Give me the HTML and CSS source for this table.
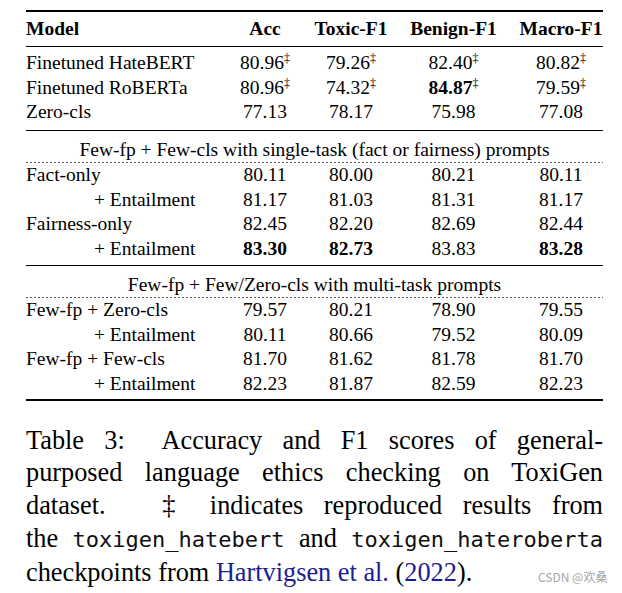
FILE: index.html
```html
<!DOCTYPE html>
<html lang="en">
<head>
<meta charset="utf-8">
<title>Table 3</title>
<link rel="stylesheet" href="styles.css">
</head>
<body>
<div class="page">
  <table class="results">
    <colgroup>
      <col class="c-model"><col class="c-acc"><col class="c-tox"><col class="c-ben"><col class="c-mac">
    </colgroup>
    <thead>
      <tr>
        <th class="name">Model</th><th>Acc</th><th>Toxic-F1</th><th>Benign-F1</th><th class="lastcol">Macro-F1</th>
      </tr>
    </thead>
    <tbody class="sec sec1">
      <tr><td class="name">Finetuned HateBERT</td><td>80.96<sup class="dg">‡</sup></td><td>79.26<sup class="dg">‡</sup></td><td>82.40<sup class="dg">‡</sup></td><td class="lastcol">80.82<sup class="dg">‡</sup></td></tr>
      <tr><td class="name">Finetuned RoBERTa</td><td>80.96<sup class="dg">‡</sup></td><td>74.32<sup class="dg">‡</sup></td><td><b>84.87</b><sup class="dg">‡</sup></td><td class="lastcol">79.59<sup class="dg">‡</sup></td></tr>
      <tr><td class="name">Zero-cls</td><td>77.13</td><td>78.17</td><td>75.98</td><td class="lastcol">77.08</td></tr>
    </tbody>
    <tbody class="sec sec2">
      <tr class="group"><td colspan="5">Few-fp + Few-cls with single-task (fact or fairness) prompts</td></tr>
      <tr><td class="name">Fact-only</td><td>80.11</td><td>80.00</td><td>80.21</td><td class="lastcol">80.11</td></tr>
      <tr><td class="name sub">+ Entailment</td><td>81.17</td><td>81.03</td><td>81.31</td><td class="lastcol">81.17</td></tr>
      <tr><td class="name">Fairness-only</td><td>82.45</td><td>82.20</td><td>82.69</td><td class="lastcol">82.44</td></tr>
      <tr><td class="name sub">+ Entailment</td><td><b>83.30</b></td><td><b>82.73</b></td><td>83.83</td><td class="lastcol"><b>83.28</b></td></tr>
    </tbody>
    <tbody class="sec sec3">
      <tr class="group"><td colspan="5">Few-fp + Few/Zero-cls with multi-task prompts</td></tr>
      <tr><td class="name">Few-fp + Zero-cls</td><td>79.57</td><td>80.21</td><td>78.90</td><td class="lastcol">79.55</td></tr>
      <tr><td class="name sub">+ Entailment</td><td>80.11</td><td>80.66</td><td>79.52</td><td class="lastcol">80.09</td></tr>
      <tr><td class="name">Few-fp + Few-cls</td><td>81.70</td><td>81.62</td><td>81.78</td><td class="lastcol">81.70</td></tr>
      <tr><td class="name sub">+ Entailment</td><td>82.23</td><td>81.87</td><td>82.59</td><td class="lastcol">82.23</td></tr>
    </tbody>
  </table>

  <p class="caption">
    <span class="line">Table 3:<span class="gap-s"></span> Accuracy and F1 scores of general-</span>
    <span class="line">purposed language ethics checking on ToxiGen</span>
    <span class="line">dataset.<span class="gap-l"></span> ‡ indicates reproduced results from</span>
    <span class="line">the <code>toxigen_hatebert</code> and <code>toxigen_hateroberta</code></span>
    <span class="line final">checkpoints from <a class="cite">Hartvigsen et al.</a> (<a class="cite">2022</a>).</span>
  </p>
  <div class="watermark">CSDN @欢桑</div>
</div>
</body>
</html>
```

FILE: styles.css
```css
html, body {
  margin: 0;
  padding: 0;
  background: #fff;
}

.page {
  position: relative;
  width: 577px;
  height: 593px;
  padding: 10px 19px 0 26px;
  box-sizing: content-box;
  color: #000;
  font-family: "Liberation Serif", "Times New Roman", serif;
}

.results {
  width: 577px;
  table-layout: fixed;
  border-collapse: separate;
  border-spacing: 0;
  border-top: 2px solid #000;
  border-bottom: 2px solid #000;
  font-size: 19.5px;
  line-height: 24.5px;
}

.c-model { width: 202px; }
.c-acc { width: 74px; }
.c-tox { width: 98px; }
.c-ben { width: 107px; }
.c-mac { width: 96px; }

.results th,
.results td {
  padding: 0;
  text-align: center;
  white-space: nowrap;
  font-weight: normal;
}

.results th {
  font-weight: bold;
  line-height: 24px;
  padding: 5px 0;
  border-bottom: 1px solid #000;
}

.results .name {
  text-align: left;
}

.results .name.sub {
  padding-left: 68px;
}

.results .lastcol {
  padding-left: 12px;
}

.sec1 tr:first-child td { padding-top: 4px; }
.sec1 tr:last-child td { padding-bottom: 5.5px; }

.sec2 tr:first-child td,
.sec3 tr:first-child td {
  border-top: 1px solid #000;
}

.results tr.group td {
  text-align: center;
  padding: 6.5px 0 1px 0;
  background-image: repeating-linear-gradient(90deg, #555 0 2px, transparent 2px 4px);
  background-size: 100% 1px;
  background-position: left bottom;
  background-repeat: no-repeat;
}

.sec2 tr:last-child td { padding-bottom: 4px; }
.sec3 tr:last-child td { padding-bottom: 2.5px; }

.dg {
  font-size: 12px;
  line-height: 0;
  vertical-align: 7px;
  font-weight: normal;
}

.caption {
  margin: 24px 0 0 0;
  font-size: 26.3px;
  line-height: 32.75px;
}

.caption .line {
  display: block;
  text-align: justify;
  text-align-last: justify;
  white-space: nowrap;
}

.caption .line.final {
  text-align-last: left;
}

.gap-s {
  display: inline-block;
  width: 18px;
}

.gap-l {
  display: inline-block;
  width: 36px;
}

.caption code {
  font-family: "DejaVu Sans Mono", "Liberation Mono", monospace;
  font-size: 22px;
  color: #111;
}

.cite {
  color: #1c1c96;
  text-decoration: none;
}

.watermark {
  position: absolute;
  left: 538px;
  top: 569px;
  font-family: "Noto Sans CJK SC", "Noto Sans", sans-serif;
  font-size: 12px;
  line-height: 16px;
  color: #a6a6a6;
  white-space: nowrap;
}
```
